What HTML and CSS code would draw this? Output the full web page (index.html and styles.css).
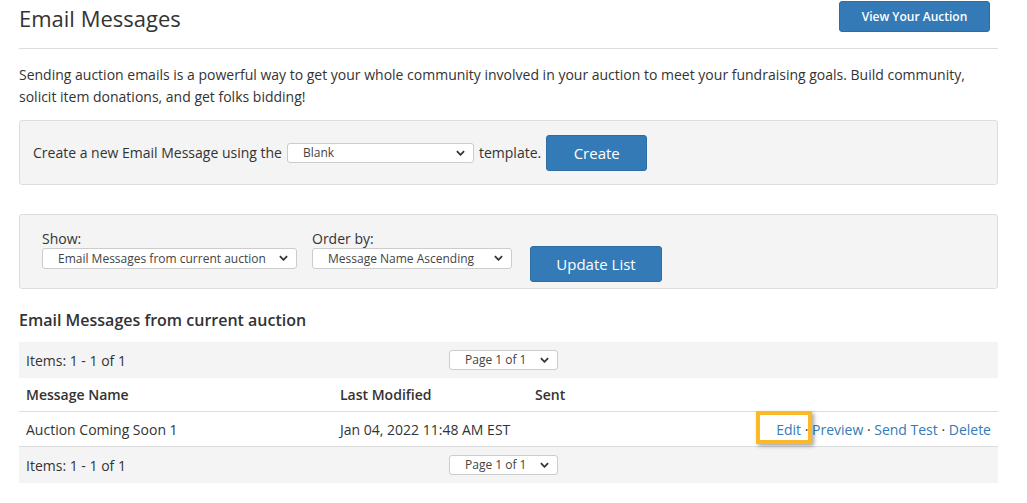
FILE: index.html
```html
<!DOCTYPE html>
<html>
<head>
<meta charset="utf-8">
<link rel="stylesheet" href="styles.css">
</head>
<body>
<div class="page">
  <header class="page-head">
    <h1 class="title">Email Messages</h1>
    <button class="btn btn-small">View Your Auction</button>
  </header>

  <p class="intro">Sending auction emails is a powerful way to get your whole community involved in your auction to meet your fundraising goals. Build community, solicit item donations, and get folks bidding!</p>

  <div class="panel create-panel">
    <span>Create a new Email Message using the</span>
    <span class="sel sel-blank"><select><option>Blank</option></select><svg class="chev" viewBox="0 0 10 6"><path d="M1 1l4 4 4-4" /></svg></span>
    <span>template.</span>
    <button class="btn btn-create">Create</button>
  </div>

  <div class="panel filter-panel">
    <div class="field">
      <label>Show:</label>
      <span class="sel sel-show"><select><option>Email Messages from current auction</option></select><svg class="chev" viewBox="0 0 10 6"><path d="M1 1l4 4 4-4" /></svg></span>
    </div>
    <div class="field">
      <label>Order by:</label>
      <span class="sel sel-order"><select><option>Message Name Ascending</option></select><svg class="chev" viewBox="0 0 10 6"><path d="M1 1l4 4 4-4" /></svg></span>
    </div>
    <button class="btn btn-update">Update List</button>
  </div>

  <h2 class="section-title">Email Messages from current auction</h2>

  <div class="list">
    <div class="bar">
      <span>Items: 1 - 1 of 1</span>
      <span class="sel sel-page"><select><option>Page 1 of 1</option></select><svg class="chev" viewBox="0 0 10 6"><path d="M1 1l4 4 4-4" /></svg></span>
    </div>
    <div class="row head-row">
      <span>Message Name</span>
      <span>Last Modified</span>
      <span>Sent</span>
      <span></span>
    </div>
    <div class="row data-row">
      <span>Auction Coming Soon 1</span>
      <span>Jan 04, 2022 11:48 AM EST</span>
      <span></span>
      <span class="actions"><a class="edit">Edit<span class="highlight"></span></a> · <a>Preview</a> · <a>Send Test</a> · <a>Delete</a></span>
    </div>
    <div class="bar">
      <span>Items: 1 - 1 of 1</span>
      <span class="sel sel-page"><select><option>Page 1 of 1</option></select><svg class="chev" viewBox="0 0 10 6"><path d="M1 1l4 4 4-4" /></svg></span>
    </div>
  </div>
</div>
</body>
</html>
```

FILE: styles.css
```css
* { box-sizing: border-box; }
html, body { margin: 0; padding: 0; background: #fff; }
body {
  font-family: "Open Sans", "Liberation Sans", sans-serif;
  font-size: 14px;
  color: #333;
}
.page {
  width: 979px;
  margin-left: 19px;
}
.page-head {
  display: flex;
  justify-content: space-between;
  align-items: flex-start;
  height: 49px;
  border-bottom: 1px solid #ddd;
}
.title {
  margin: 1px 0 0;
  font-size: 22px;
  font-weight: 400;
  line-height: 34px;
  color: #333;
}
.btn {
  font-family: "Open Sans", "Liberation Sans", sans-serif;
  background: #337ab7;
  border: 1px solid #2e6da4;
  border-radius: 3px;
  color: #fff;
  padding: 0;
  cursor: pointer;
}
.btn-small {
  margin: 1px 8px 0 0;
  width: 151px;
  height: 31px;
  font-size: 12px;
  font-weight: 600;
}
.intro {
  margin: 15px 0 12px;
  line-height: 22px;
}
.panel {
  background: #f4f4f4;
  border: 1px solid #ddd;
  border-radius: 3px;
}
.create-panel {
  display: flex;
  align-items: center;
  height: 65px;
  padding: 0 13px;
  gap: 5px;
}
.btn-create {
  width: 101px;
  height: 36px;
  font-size: 15px;
}
.sel {
  position: relative;
  display: inline-block;
}
.sel select {
  appearance: none;
  -webkit-appearance: none;
  display: block;
  height: 20px;
  border: 1px solid #ccc;
  border-radius: 3px;
  background: #fff;
  font-family: "Open Sans", "Liberation Sans", sans-serif;
  font-size: 12px;
  color: #444;
  padding: 0 0 0 15px;
  margin: 0;
  line-height: 18px;
}
.sel .chev {
  position: absolute;
  right: 9px;
  top: 7px;
  width: 9px;
  height: 6px;
  fill: none;
  stroke: #333;
  stroke-width: 2;
  pointer-events: none;
}
.sel-blank select { width: 187px; }
.sel-show select { width: 255px; height: 21px; }
.sel-order select { width: 200px; height: 21px; }
.sel-page select { width: 109px; }
.filter-panel {
  display: flex;
  align-items: flex-start;
  margin-top: 29px;
  padding: 15px 22px 6px;
}
.field {
  display: flex;
  flex-direction: column;
  margin-right: 15px;
}
.field label {
  line-height: 18px;
}
.field + .field { margin-right: 18px; }
.btn-update {
  margin-top: 16px;
  width: 132px;
  height: 36px;
  font-size: 15px;
}
.section-title {
  margin: 20px 0 11px;
  font-size: 16px;
  font-weight: 600;
  line-height: 22px;
}
.list {
  width: 979px;
}
.bar {
  display: grid;
  grid-template-columns: 423px auto 1fr;
  align-items: center;
  height: 36px;
  background: #f4f4f4;
  padding-left: 7px;
}
.row {
  display: grid;
  grid-template-columns: 314px 195px 1fr auto;
  align-items: center;
  height: 34px;
  padding: 0 7px;
  border-bottom: 1px solid #ddd;
}
.head-row { font-weight: 600; height: 34px; }
.data-row { height: 35px; }
.actions a {
  color: #337ab7;
}
.edit {
  position: relative;
}
.highlight {
  position: absolute;
  left: -20px;
  top: -9px;
  width: 56px;
  height: 33px;
  border: 4px solid #fbb829;
  box-shadow: 2px 2px 4px rgba(0,0,0,0.35);
}
```
